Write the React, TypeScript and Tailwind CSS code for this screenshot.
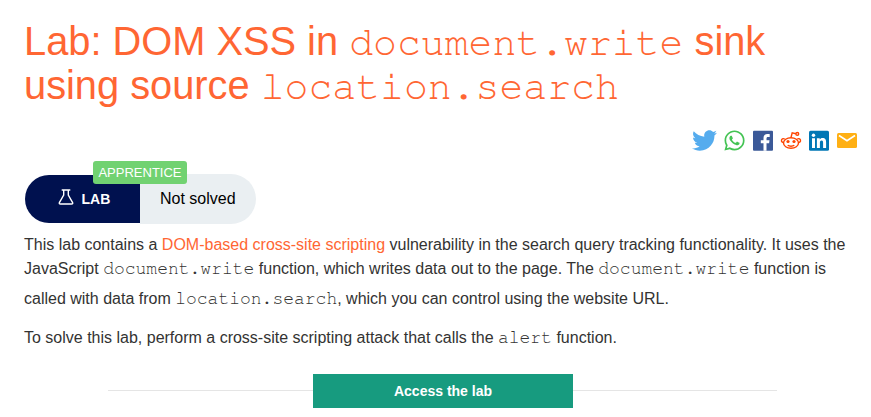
import { FaTwitter, FaWhatsapp } from "react-icons/fa";

function Code({ children, large = false }: { children: string; large?: boolean }) {
  return (
    <code
      className={`font-['FreeMono','Nimbus_Mono_PS','Liberation_Mono',monospace] leading-none ${
        large ? "text-[39.8px]" : "text-[18px]"
      }`}
    >
      {children}
    </code>
  );
}

function ShareIcons() {
  return (
    <div className="mt-[22px] flex h-6 items-center justify-end gap-[6px] pr-[13px]">
      <FaTwitter className="mr-[1px] mb-[1px] size-[25px] text-[#55acee]" />
      <FaWhatsapp className="mr-0 mb-[1px] ml-[-1px] size-[23px] text-[#43c353]" />
      <svg className="size-[22px]" viewBox="0 0 22 22">
        <rect x="1" y="0.700" width="20" height="20" rx="1" fill="#3b5998" />
        <path d="M14.500 20.700v-7.400h2.600l.4-3h-3V8.400c0-.9.3-1.500 1.500-1.500h1.700V4.200c-.3 0-1.200-.1-2.300-.1-2.300 0-3.900 1.400-3.900 4v2.200H8.800v3h2.700v7.400z" fill="#fff" />
      </svg>
      <svg className="size-[22px]" viewBox="0 0 22 22" fill="none" stroke="#ff4500" strokeWidth="1.400">
        <ellipse cx="11" cy="13" rx="7.500" ry="5.300" />
        <path d="M4.800 9.300C3 7.800 1.200 9.300 1.500 11c.2.900.9 1.300 1.900 1.700M17.200 9.300c1.800-1.500 3.600 0 3.300 1.700-.2.900-.9 1.300-1.900 1.700M11 7.500l1.200-4.600 3.700.8" />
        <circle cx="17.300" cy="3.900" r="1.400" />
        <path d="M7.700 15.200c1.700 1.300 4.900 1.300 6.600 0" />
        <circle cx="8" cy="11.500" r="1.600" fill="#ff4500" stroke="none" />
        <circle cx="14" cy="11.500" r="1.600" fill="#ff4500" stroke="none" />
      </svg>
      <svg className="size-[22px]" viewBox="0 0 22 22">
        <rect x="1" y="0.700" width="20" height="20" rx="1.500" fill="#0077b5" />
        <g fill="#fff">
          <circle cx="5.500" cy="5.200" r="1.700" />
          <path d="M4 8.200h3V18H4zM8.900 8.200h2.800v1.300c.5-.9 1.500-1.500 2.800-1.500 2.900 0 3.600 1.800 3.600 4.400V18h-3v-5c0-1.200-.1-2.400-1.500-2.400s-1.700 1.100-1.700 2.300V18h-3z" />
        </g>
      </svg>
      <svg className="size-[22px]" viewBox="0 0 22 22">
        <rect x="1" y="2.900" width="20" height="15.200" rx="1.500" fill="#ffb014" />
        <path d="M3 5.500l8 5.200 8-5.200" fill="none" stroke="#fff" strokeWidth="1.700" />
      </svg>
    </div>
  );
}

function LabStatus() {
  return (
    <div className="relative mt-[21px] ml-[1px] flex h-[50px] w-[231px] items-center">
      <div className="flex h-12 w-[115px] items-center rounded-l-full bg-[#00114f] pl-[33px] text-white">
        <svg className="mt-[-5px] h-4 w-4" viewBox="0 0 16 16" fill="none" stroke="currentColor" strokeWidth="1.400">
          <path d="M3.700 1h8.600M5.700 1v5L1.500 13.300q-.8 1.700 1 1.700h11q1.800 0 1-1.700L10.300 6V1" />
        </svg>
        <span className="ml-[7.500px] text-[14px] font-bold">LAB</span>
      </div>
      <div className="flex h-[50px] w-[116px] items-center rounded-r-full bg-[#eaeff2] pl-5 text-[16px] text-black">
        Not solved
      </div>
      <span className="absolute top-[-13px] left-[68px] flex h-[23px] w-[94px] items-center justify-center rounded-[3px] bg-[#71d271] text-[13px] text-white">
        APPRENTICE
      </span>
    </div>
  );
}

export default function App() {
  return (
    <main className="h-[417px] overflow-hidden bg-white font-['Liberation_Sans',Arial,sans-serif] text-[#333332]">
      <h1 className="pt-[19px] pl-6 text-[39.8px] leading-[44px] whitespace-nowrap text-[#ff6633]">
        <span className="block h-11">
          Lab: DOM XSS in <Code large>document.write</Code> sink
        </span>
        <span className="block h-11">
          using source <Code large>location.search</Code>
        </span>
      </h1>
      <ShareIcons />
      <div className="pl-6">
        <LabStatus />
        <p className="mt-[9px] text-[16px] leading-6 whitespace-nowrap">
          <span className="block h-6">
            This lab contains a <a className="text-[#ff6633]">DOM-based cross-site scripting</a> vulnerability in the search query tracking functionality. It uses the
          </span>
          <span className="block h-[30px]">
            JavaScript <Code>document.write</Code> function, which writes data out to the page. The <Code>document.write</Code> function is
          </span>
          <span className="block h-6">
            called with data from <Code>location.search</Code>, which you can control using the website URL.
          </span>
        </p>
        <p className="mt-[15px] h-6 text-[16px] leading-6 whitespace-nowrap">
          To solve this lab, perform a cross-site scripting attack that calls the <Code>alert</Code> function.
        </p>
      </div>
      <div className="mt-6 ml-[108px] flex w-[669px] items-start">
        <div className="mt-4 h-px w-[205px] bg-[#e5e5e5]" />
        <button className="h-[34px] w-[260px] bg-[#179b7f] text-[14px] font-bold text-white">
          Access the lab
        </button>
        <div className="mt-4 h-px flex-1 bg-[#e5e5e5]" />
      </div>
    </main>
  );
}
